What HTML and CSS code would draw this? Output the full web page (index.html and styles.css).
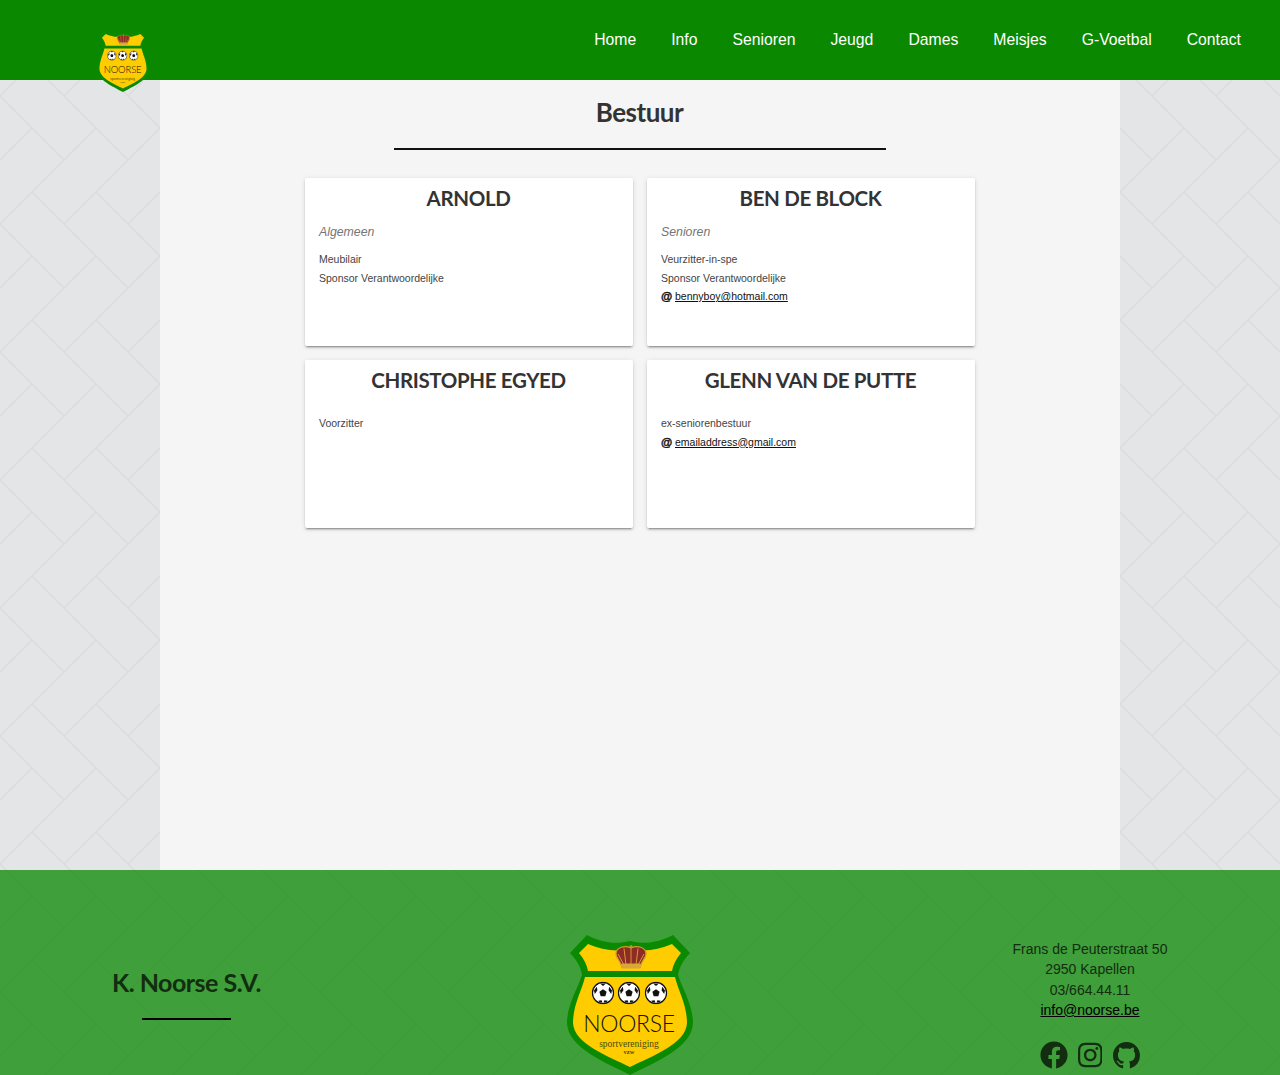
FILE: index.html
```html
<!DOCTYPE html>
<html lang="nl">
<head>
  <title>Bestuur - K. Noorse S.V.</title>
  <meta charset="utf-8" />
  <link rel="stylesheet" href="styles.css">
</head>
<body>
  <svg class="defs" width="0" height="0">
    <symbol id="ball" viewBox="0 0 24 24">
      <circle cx="12" cy="12" r="11" fill="#fff" stroke="#111" stroke-width="1.3"/>
      <path d="M12 8l3.8 2.8-1.4 4.5H9.6l-1.4-4.5z" fill="#111"/>
      <path d="M9 2l6 0-3 2.6zM2.6 9.5L5.5 5.5 6.2 9 3.5 13zM21.4 9.5L18.500 5.500 17.800 9 20.500 13zM7 20l3.500-.5 1 2.500-3-.4zM17 20l-3.500-.5-1 2.500 3-.4z" fill="#111"/>
    </symbol>
    <symbol id="crown" viewBox="0 0 32 24">
      <path d="M16 3C22 0 31 2 31 9c0 4-4 6-5 11H6C5 15 1 13 1 9 1 2 10 0 16 3z" fill="#8e2b24" stroke="#d39a35" stroke-width="1.300"/>
      <path d="M16 3v17M9 3.500l2 16.500M23 3.500l-2 16.500M3 9l6 11M29 9l-6 11" stroke="#d39a35" stroke-width="1" fill="none"/>
      <rect x="6" y="18.500" width="20" height="5" rx="1" fill="#d9a638"/>
      <path d="M16 0v3M14.500 1.200h3" stroke="#d39a35" stroke-width="1"/>
    </symbol>
  </svg>

  <header class="topbar">
    <svg class="logo-small" viewBox="27 13 126 142" preserveAspectRatio="none">
      <path d="M30 33L47 15C60 22 75 25 90 21C105 25 120 22 133 15L150 33C143 40 139 48 138 55C142 68 153 85 153 103C152 128 115 142 90 155C65 142 28 128 27 103C27 85 38 68 42 55C41 48 37 40 30 33Z" fill="#0a8a00"/>
      <path d="M39 33L48 24C62 30 76 32 90 29C104 32 118 30 132 24L141 33C136 39 133 45 132 51L48 51C47 45 44 39 39 33Z" fill="#fc0"/>
      <path d="M45 57L135 57C138 70 147 85 147 103C146 124 112 136 90 147C68 136 34 124 33 103C33 85 42 70 45 57Z" fill="#fc0"/>
      <use href="#crown" x="75" y="25" width="32" height="24"/>
      <use href="#ball" x="51.500" y="61.500" width="23" height="23"/>
      <use href="#ball" x="77.500" y="61.500" width="23" height="23"/>
      <use href="#ball" x="104.500" y="61.500" width="23" height="23"/>
      <text class="crest-name" x="89" y="112" text-anchor="middle">NOORSE</text>
      <text class="crest-sub" x="89" y="127" text-anchor="middle">sportvereniging</text>
      <text class="crest-vzw" x="89" y="134" text-anchor="middle">vzw</text>
    </svg>
    <nav class="menu">
      <a href="#">Home</a>
      <a href="#">Info</a>
      <a href="#">Senioren</a>
      <a href="#">Jeugd</a>
      <a href="#">Dames</a>
      <a href="#">Meisjes</a>
      <a href="#">G-Voetbal</a>
      <a href="#">Contact</a>
    </nav>
  </header>

  <main class="content">
    <h1 class="title">Bestuur</h1>
    <hr class="rule">
    <section class="cards">
      <article class="card">
        <h2>ARNOLD</h2>
        <p class="role">Algemeen</p>
        <p class="line">Meubilair</p>
        <p class="line">Sponsor Verantwoordelijke</p>
      </article>
      <article class="card">
        <h2>BEN DE BLOCK</h2>
        <p class="role">Senioren</p>
        <p class="line">Veurzitter-in-spe</p>
        <p class="line">Sponsor Verantwoordelijke</p>
        <p class="mail"><b>@</b><a href="#">bennyboy@hotmail.com</a></p>
      </article>
      <article class="card">
        <h2>CHRISTOPHE EGYED</h2>
        <p class="role"></p>
        <p class="line">Voorzitter</p>
      </article>
      <article class="card">
        <h2>GLENN VAN DE PUTTE</h2>
        <p class="role"></p>
        <p class="line">ex-seniorenbestuur</p>
        <p class="mail"><b>@</b><a href="#">emailaddress@gmail.com</a></p>
      </article>
    </section>
  </main>

  <footer class="footer">
    <div class="club">
      <h3>K. Noorse S.V.</h3>
      <hr>
    </div>
    <div class="crest">
      <svg class="logo-big" viewBox="27 13 126 142">
        <path d="M30 33L47 15C60 22 75 25 90 21C105 25 120 22 133 15L150 33C143 40 139 48 138 55C142 68 153 85 153 103C152 128 115 142 90 155C65 142 28 128 27 103C27 85 38 68 42 55C41 48 37 40 30 33Z" fill="#0a8a00"/>
        <path d="M39 33L48 24C62 30 76 32 90 29C104 32 118 30 132 24L141 33C136 39 133 45 132 51L48 51C47 45 44 39 39 33Z" fill="#fc0"/>
        <path d="M45 57L135 57C138 70 147 85 147 103C146 124 112 136 90 147C68 136 34 124 33 103C33 85 42 70 45 57Z" fill="#fc0"/>
        <use href="#crown" x="75" y="25" width="32" height="24"/>
        <use href="#ball" x="51.500" y="61.500" width="23" height="23"/>
        <use href="#ball" x="77.500" y="61.500" width="23" height="23"/>
        <use href="#ball" x="104.500" y="61.500" width="23" height="23"/>
        <text class="crest-name" x="89" y="112" text-anchor="middle">NOORSE</text>
        <text class="crest-sub" x="89" y="127" text-anchor="middle">sportvereniging</text>
        <text class="crest-vzw" x="89" y="134" text-anchor="middle">vzw</text>
      </svg>
    </div>
    <div class="contact">
      <p>Frans de Peuterstraat 50</p>
      <p>2950 Kapellen</p>
      <p>03/664.44.11</p>
      <p><a href="#">info@noorse.be</a></p>
      <div class="socials">
        <svg class="fb" viewBox="0 0 512 512"><path d="M504 256C504 119 393 8 256 8S8 119 8 256c0 123.78 90.69 226.38 209.25 245V327.69h-63V256h63v-54.64c0-62.15 37-96.48 93.67-96.48 27.14 0 55.52 4.84 55.52 4.84v61h-31.28c-30.8 0-40.41 19.12-40.41 38.73V256h68.78l-11 71.69h-57.78V501C413.31 482.38 504 379.78 504 256z"/></svg>
        <svg class="ig" viewBox="0 0 448 512"><path d="M224.1 141c-63.6 0-114.9 51.3-114.9 114.9s51.3 114.9 114.9 114.9S339 319.5 339 255.9 287.7 141 224.1 141zm0 189.6c-41.1 0-74.7-33.5-74.7-74.7s33.5-74.7 74.7-74.7 74.7 33.5 74.7 74.7-33.6 74.7-74.7 74.7zm146.4-194.3c0 14.9-12 26.8-26.8 26.8-14.9 0-26.8-12-26.8-26.8s12-26.8 26.8-26.8 26.8 12 26.8 26.8zm76.1 27.2c-1.7-35.9-9.9-67.7-36.2-93.9-26.2-26.2-58-34.4-93.9-36.2-37-2.1-147.9-2.1-184.9 0-35.8 1.7-67.6 9.9-93.9 36.1s-34.4 58-36.2 93.9c-2.1 37-2.1 147.9 0 184.9 1.7 35.9 9.9 67.7 36.2 93.9s58 34.4 93.9 36.2c37 2.1 147.9 2.1 184.9 0 35.9-1.7 67.7-9.9 93.9-36.2 26.2-26.2 34.4-58 36.2-93.9 2.1-37 2.1-147.8 0-184.8zM398.8 388c-7.8 19.6-22.9 34.7-42.6 42.6-29.5 11.7-99.5 9-132.1 9s-102.7 2.6-132.1-9c-19.6-7.8-34.7-22.9-42.6-42.6-11.7-29.5-9-99.5-9-132.1s-2.6-102.7 9-132.1c7.8-19.6 22.9-34.7 42.6-42.6 29.5-11.7 99.5-9 132.1-9s102.7-2.6 132.1 9c19.6 7.8 34.7 22.9 42.6 42.6 11.7 29.5 9 99.5 9 132.1s2.7 102.7-9 132.1z"/></svg>
        <svg class="gh" viewBox="0 0 16 16"><path d="M8 0C3.58 0 0 3.58 0 8c0 3.54 2.29 6.53 5.47 7.59.4.07.55-.17.55-.38 0-.19-.01-.82-.01-1.49-2.01.37-2.53-.49-2.69-.94-.09-.23-.48-.94-.82-1.13-.28-.15-.68-.52-.01-.53.63-.01 1.08.58 1.23.82.72 1.21 1.87.87 2.33.66.07-.52.28-.87.51-1.07-1.78-.2-3.64-.89-3.64-3.95 0-.87.31-1.59.82-2.15-.08-.2-.36-1.02.08-2.12 0 0 .67-.21 2.2.82.64-.18 1.32-.27 2-.27.68 0 1.36.09 2 .27 1.53-1.04 2.2-.82 2.2-.82.44 1.1.16 1.92.08 2.12.51.56.82 1.27.82 2.15 0 3.07-1.87 3.75-3.65 3.95.29.25.54.73.54 1.48 0 1.07-.01 1.93-.01 2.2 0 .21.15.46.55.38A8.013 8.013 0 0016 8c0-4.42-3.58-8-8-8z"/></svg>
      </div>
    </div>
  </footer>
</body>
</html>
```

FILE: styles.css
```css
* {
  margin: 0;
  padding: 0;
  box-sizing: border-box;
}

html {
  overflow-x: hidden;
}

body {
  font-family: "Liberation Sans", Arial, sans-serif;
  color: #333;
  background-color: #e4e5e7;
  background-image: url("data:image/svg+xml,%3Csvg xmlns='http://www.w3.org/2000/svg' width='64' height='128'%3E%3Cpath d='M32 0L-64 96M96 0L0 96M160 0L64 96M32 64L64 96M-32 64L32 128M32 0L64 32' fill='none' stroke='%23dcdcde' stroke-width='1.6'/%3E%3C/svg%3E");
}

.defs {
  display: block;
  height: 0;
}

.crest-name {
  font-family: Lato, sans-serif;
  font-weight: 300;
  font-size: 23px;
  letter-spacing: -0.3px;
  fill: #111;
}

.crest-sub {
  font-family: "Liberation Serif", serif;
  font-size: 9.5px;
  fill: #4a4a10;
}

.crest-vzw {
  font-family: "Liberation Serif", serif;
  font-weight: bold;
  font-size: 6.5px;
  fill: #4a4a10;
}

/* top bar */
.topbar {
  position: relative;
  height: 80px;
  background: #0a8900;
  display: flex;
  justify-content: flex-end;
  align-items: center;
  padding-right: 39px;
}

.logo-small {
  position: absolute;
  left: 97px;
  top: 29px;
  width: 52px;
  height: 63px;
}

.menu {
  display: flex;
  gap: 35px;
}

.menu a {
  color: #fff;
  font-size: 15.75px;
  text-decoration: none;
}

/* content */
.content {
  width: 960px;
  height: 790px;
  margin: 0 auto;
  padding-top: 15px;
  background: #f5f5f5;
}

.title {
  font-family: Lato, sans-serif;
  font-size: 26px;
  line-height: 34px;
  letter-spacing: -0.5px;
  text-align: center;
  padding-right: 1px;
}

.rule {
  width: 492px;
  height: 2px;
  margin: 19px auto 28px;
  border: 0;
  background: #111;
}

.cards {
  display: grid;
  grid-template-columns: 328px 328px;
  gap: 14px;
  justify-content: center;
}

.card {
  height: 168px;
  padding: 7px 14px 0;
  background: #fff;
  border-radius: 2px;
  box-shadow: 0 2px 2px rgba(0, 0, 0, .14), 0 3px 1px -2px rgba(0, 0, 0, .2), 0 1px 5px rgba(0, 0, 0, .12);
}

.card h2 {
  font-family: Lato, sans-serif;
  font-size: 20.5px;
  line-height: 26px;
  letter-spacing: -0.35px;
  text-align: center;
  padding-right: 1px;
}

.role {
  margin-top: 13px;
  margin-bottom: 10px;
  font-size: 12.3px;
  line-height: 16px;
  font-style: italic;
  color: #757575;
}

.role:empty {
  margin-bottom: 21px;
}

.line {
  font-size: 10.5px;
  line-height: 18.6px;
  color: #444;
}

.mail {
  font-size: 10.5px;
  line-height: 18px;
  color: #111;
}

.mail b {
  display: inline-block;
  width: 14px;
  font-size: 11.5px;
  -webkit-text-stroke: .4px #111;
}

.mail a {
  color: #111;
}

/* footer */
.footer {
  height: 205px;
  display: grid;
  grid-template-columns: 374px 512px 1fr;
  overflow: hidden;
  color: #132d10;
  background-color: #3f9f3a;
  background-image: url("data:image/svg+xml,%3Csvg xmlns='http://www.w3.org/2000/svg' width='64' height='128'%3E%3Cpath d='M32 0L-64 96M96 0L0 96M160 0L64 96M32 64L64 96M-32 64L32 128M32 0L64 32' fill='none' stroke='%233d9c38' stroke-width='1.5'/%3E%3C/svg%3E");
  background-position: 0 -102px;
}

.club {
  padding: 95px 1px 0 0;
  text-align: center;
}

.club h3 {
  font-family: Lato, sans-serif;
  font-size: 25px;
  line-height: 34px;
  letter-spacing: -0.5px;
}

.club hr {
  width: 89px;
  height: 2px;
  margin: 19px auto 0;
  border: 0;
  background: #000;
}

.crest {
  text-align: center;
  padding-top: 63px;
}

.logo-big {
  width: 126px;
  height: 142px;
}

.contact {
  padding: 69px 0 0 14px;
  text-align: center;
  font-size: 14px;
  line-height: 20.3px;
}

.contact a {
  color: #000;
}

.socials {
  display: flex;
  justify-content: center;
  align-items: center;
  margin-top: 21px;
}

.socials svg {
  fill: #132d10;
}

.fb {
  width: 28px;
  height: 28px;
}

.ig {
  width: 24.5px;
  height: 28px;
  margin: 0 11px 0 10px;
}

.gh {
  width: 27px;
  height: 27px;
}
```
